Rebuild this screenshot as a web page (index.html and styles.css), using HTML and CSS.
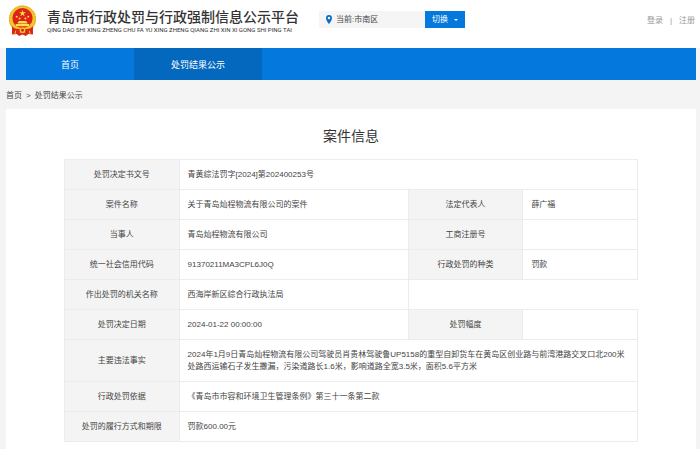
FILE: index.html
```html
<!DOCTYPE html>
<html lang="zh-CN">
<head>
<meta charset="utf-8">
<meta name="viewport" content="width=device-width, initial-scale=1">
<title>青岛市行政处罚与行政强制信息公示平台</title>
<link rel="stylesheet" href="styles.css">
</head>
<body>
<header class="header">
  <svg class="emblem" viewBox="0 0 60 64" aria-hidden="true">
    <path fill="#d9281c" d="M10 44 8 60l10-1 5 4 7-3 7 3 5-4 10 1-2-16z"/>
    <circle cx="30" cy="28" r="28" fill="#f1c52c"/>
    <circle cx="30" cy="28" r="27" fill="none" stroke="#dfa81c" stroke-width="2" stroke-dasharray="4 2"/>
    <circle cx="30" cy="26" r="21" fill="#dc2418"/>
    <path fill="#fbe04a" d="m30 9 1.800 5h5.200l-4.200 3.200 1.600 5.200L30 19.200l-4.400 3.200 1.600-5.200L23 14h5.200z"/>
    <g fill="#fbe04a"><circle cx="18" cy="23" r="2"/><circle cx="24" cy="27" r="2"/><circle cx="36" cy="27" r="2"/><circle cx="42" cy="23" r="2"/>
    <path d="M20 35l3-3h14l3 3v2H20zM16 38h28v5H16z"/></g>
    <path fill="#dc2418" d="M8 43c8 8 14 5 22 5s14 3 22-5l-1 14c-7 3-11 2-15-1H24c-4 3-8 4-15 1z"/>
    <circle cx="30" cy="51" r="6" fill="#f1c52c"/>
    <circle cx="30" cy="51" r="3" fill="#dc2418"/>
    <path fill="none" stroke="#f1c52c" stroke-width="2" d="m16 52-2 8m30-8 2 8"/>
  </svg>
  <div class="brand">
    <h1 class="brand-name">青岛市行政处罚与行政强制信息公示平台</h1>
    <p class="brand-pinyin">QING DAO SHI XING ZHENG CHU FA YU XING ZHENG QIANG ZHI XIN XI GONG SHI PING TAI</p>
  </div>
  <div class="region">
    <svg class="pin" viewBox="0 0 12 18" aria-hidden="true"><path fill="#0b6cc7" fill-rule="evenodd" d="M6 0a6 6 0 0 0-6 6c0 5 6 12 6 12s6-7 6-12a6 6 0 0 0-6-6zm0 3.500a2.500 2.500 0 1 1 0 5 2.500 2.500 0 0 1 0-5z"/></svg>
    <span class="region-name">当前:市南区</span>
    <button class="switch" type="button">切换<svg class="caret" viewBox="0 0 8 4" aria-hidden="true"><path fill="#fff" d="M0 0h8L4 4z"/></svg></button>
  </div>
  <div class="account"><a href="#">登录</a><span>|</span><a href="#">注册</a></div>
</header>
<nav class="nav">
  <a class="nav-item" href="#">首页</a>
  <a class="nav-item active" href="#">处罚结果公示</a>
</nav>
<div class="crumbs"><a href="#">首页</a><span>&gt;</span><a href="#">处罚结果公示</a></div>
<main class="panel">
  <h2 class="panel-title">案件信息</h2>
  <table class="info">
    <colgroup><col class="label-col"><col class="wide-col"><col class="label-col"><col class="label-col"></colgroup>
    <tbody>
      <tr><th scope="row">处罚决定书文号</th><td colspan="3">青黄综法罚字[2024]第202400253号</td></tr>
      <tr><th scope="row">案件名称</th><td>关于青岛灿程物流有限公司的案件</td><th scope="row">法定代表人</th><td>薛广福</td></tr>
      <tr><th scope="row">当事人</th><td>青岛灿程物流有限公司</td><th scope="row">工商注册号</th><td></td></tr>
      <tr><th scope="row">统一社会信用代码</th><td>91370211MA3CPL6J0Q</td><th scope="row">行政处罚的种类</th><td>罚款</td></tr>
      <tr><th scope="row">作出处罚的机关名称</th><td>西海岸新区综合行政执法局</td></tr>
      <tr><th scope="row">处罚决定日期</th><td>2024-01-22 00:00:00</td><th scope="row">处罚幅度</th><td></td></tr>
      <tr><th scope="row">主要违法事实</th><td colspan="3">2024年1月9日青岛灿程物流有限公司驾驶员肖贵林驾驶鲁UP5158的重型自卸货车在黄岛区创业路与前湾港路交叉口北200米处路西运输石子发生撒漏，污染道路长1.6米，影响道路全宽3.5米，面积5.6平方米</td></tr>
      <tr><th scope="row">行政处罚依据</th><td colspan="3">《青岛市市容和环境卫生管理条例》第三十一条第二款</td></tr>
      <tr><th scope="row">处罚的履行方式和期限</th><td colspan="3">罚款600.00元</td></tr>
    </tbody>
  </table>
</main>
</body>
</html>
```
FILE: styles.css
```css
* {
  box-sizing: border-box;
}

body {
  display: flex;
  flex-direction: column;
  min-height: 100vh;
  margin: 0;
  background: #f4f4f4;
  color: #444;
  font: 8px/12px "Liberation Sans", "Noto Sans CJK SC", sans-serif;
}

h1, h2, p {
  margin: 0;
}

a {
  color: inherit;
  text-decoration: none;
}

.header {
  display: flex;
  align-items: flex-start;
  height: 48px;
  padding: 0 5px 0 8px;
  background: #fff;
}

.emblem {
  width: 29px;
  height: 32px;
  margin: 5px 10px 0 0;
}

.brand {
  padding-top: 8px;
  color: #333;
  white-space: nowrap;
}

.brand-name {
  font-size: 14px;
  font-weight: 500;
  line-height: 18px;
}

.brand-pinyin {
  font-family: Roboto, sans-serif;
  font-size: 6px;
  line-height: 8px;
}

.region {
  display: flex;
  align-items: center;
  width: 146px;
  height: 17px;
  margin: 11px 0 0 20px;
  padding-left: 7px;
  background: #f5f5f5;
}

.pin {
  width: 6px;
  height: 9px;
  margin-right: 4px;
}

.region-name {
  padding-top: 1px;
}

.switch {
  display: flex;
  align-items: center;
  justify-content: center;
  gap: 6px;
  width: 40px;
  height: 17px;
  margin-left: auto;
  padding: 1px 0 0;
  border: 0;
  background: #0478dc;
  color: #fff;
  font: inherit;
}

.caret {
  width: 4px;
  height: 2px;
}

.account {
  display: flex;
  gap: 7px;
  margin: 15px 0 0 auto;
  color: #999;
}

.nav {
  display: flex;
  height: 32px;
  margin: 0 4px 0 6px;
  background: #0478dc;
}

.nav-item {
  width: 128px;
  color: #fff;
  font-size: 9px;
  line-height: 34px;
  text-align: center;
}

.nav-item.active {
  height: 32px;
  background: #0468be;
}

.crumbs {
  display: flex;
  gap: 4px;
  padding: 10px 6px 7px;
}

.panel {
  flex: 1;
  margin: 0 4px 0 6px;
  padding: 16px 58px 7px;
  background: #fff;
}

.panel-title {
  margin-bottom: 12px;
  color: #333;
  font-size: 14px;
  font-weight: 400;
  line-height: 22px;
  text-align: center;
}

.info {
  width: 100%;
  border-collapse: collapse;
  table-layout: fixed;
}

.label-col {
  width: 20%;
}

.wide-col {
  width: 40%;
}

.info th,
.info td {
  height: 30px;
  padding: 9px 8px 8px;
  border: 1px solid #ececec;
  font-weight: 400;
  text-align: left;
}

.info th {
  background: #f4f4f4;
  text-align: center;
}
```
